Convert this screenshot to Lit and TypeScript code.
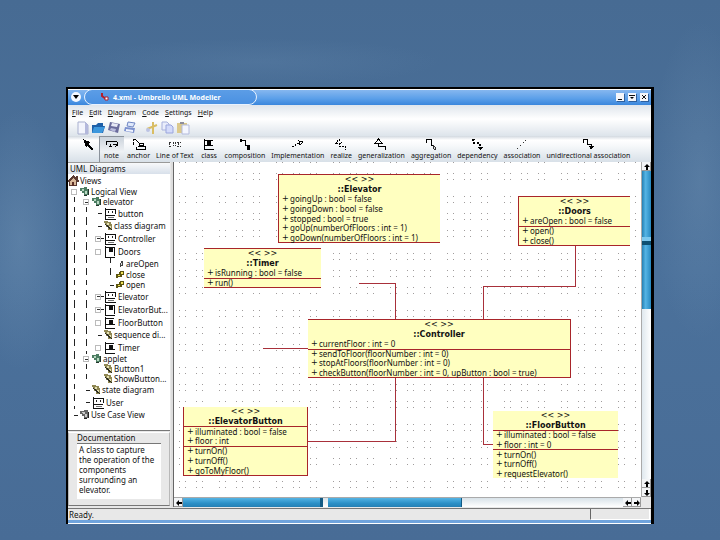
import { LitElement, html, svg, css, TemplateResult } from "lit";
import { customElement } from "lit/decorators.js";
import { classMap } from "lit/directives/class-map.js";
import { styleMap } from "lit/directives/style-map.js";

interface UmlClass {
  name: string;
  x: number;
  y: number;
  w: number;
  h: number;
  edges: string;
  headRule?: boolean;
  opsRule?: boolean;
  attrs: string[];
  ops: string[];
}

const CLASSES: UmlClass[] = [
  { name: "Elevator", x: 104, y: 12, w: 162, h: 69, edges: "tlb",
    attrs: ["goingUp : bool = false", "goingDown : bool = false", "stopped : bool = true"],
    ops: ["goUp(numberOfFloors : int = 1)", "goDown(numberOfFloors : int = 1)"] },
  { name: "Timer", x: 30, y: 86, w: 117, h: 40, edges: "tb", opsRule: true,
    attrs: ["isRunning : bool = false"], ops: ["run()"] },
  { name: "Doors", x: 344, y: 34, w: 112, h: 50, edges: "tlb", opsRule: true,
    attrs: ["areOpen : bool = false"], ops: ["open()", "close()"] },
  { name: "Controller", x: 134, y: 157, w: 263, h: 59, edges: "trb", opsRule: true,
    attrs: ["currentFloor : int = 0"],
    ops: ["sendToFloor(floorNumber : int = 0)", "stopAtFloors(floorNumber : int = 0)",
      "checkButton(floorNumber : int = 0, upButton : bool = true)"] },
  { name: "ElevatorButton", x: 9, y: 245, w: 125, h: 69, edges: "lrb", headRule: true, opsRule: true,
    attrs: ["illuminated : bool = false", "floor : int"],
    ops: ["turnOn()", "turnOff()", "goToMyFloor()"] },
  { name: "FloorButton", x: 319, y: 249, w: 125, h: 67, edges: "", headRule: true, opsRule: true,
    attrs: ["illuminated : bool = false", "floor : int = 0"],
    ops: ["turnOn()", "turnOff()", "requestElevator()"] },
];

const DOTS = [0, 6, 17, 23, 34, 40];

/* Guide cells: v = line, m = open branch, p = closed branch, b = box alone, h = tick, . = blank */
const TREE: [string, string, string, string][] = [
  ["", "home", "Views", "mid"],
  ["b", "green", "Logical View", "low"],
  ["vm", "green", "elevator", "low"],
  ["vvh", "cls", "button", "tall"],
  ["vvh", "dia", "class diagram", "mid"],
  ["vvp", "cls", "Controller", "tall"],
  ["vvb", "door", "Doors", "tall"],
  ["vv.v", "attr", "areOpen", "mid"],
  ["vv.v", "op", "close", "low"],
  ["vv.h", "op", "open", "low"],
  ["vvp", "cls", "Elevator", "tall"],
  ["vvp", "door", "ElevatorBut...", "tall"],
  ["vvb", "flag", "FloorButton", "tall"],
  ["vvh", "dia", "sequence di...", "mid"],
  ["vvb", "flag", "Timer", "tall"],
  ["vm", "green", "applet", "low"],
  ["vv.", "dia", "Button1", "low"],
  ["vv.", "dia", "ShowButton...", "low"],
  ["vh", "dia", "state diagram", "mid"],
  ["vh", "cls", "User", "tall"],
  ["h", "grey", "Use Case View", "mid"],
];

const ruled = svg`<path d="M1.5 0V11.5H12M2 1.5H11M11.5 1V6M2 7.5H11" fill="none" stroke="#111"/>`;

const TREE_ICONS: Record<string, [number, TemplateResult]> = {
  home: [11, svg`<path d="M0 6L5 0L8 2V1H10V4L11 6V7H9V11H1V7H0Z" fill="#5a3a32"/><path d="M2 6L5 3L8 6V10H2Z" fill="#d9b899"/><path d="M4 7H6V11H4Z" fill="#5b2c24"/>`],
  green: [10, svg`<path d="M0 2H4V1H7V3H9V9H7V10H4V7H2V5H0Z" fill="#4c7d62"/><path d="M2 3H4V5H2ZM5 5H7V8H5Z" fill="#b8d8c2"/><path d="M8 3V9M4 9H7" stroke="#24352c"/>`],
  grey: [10, svg`<path d="M0 2H4V1H8V3H9V9H7V10H4V7H2V5H0Z" fill="#666"/><path d="M2 3H5V5H3ZM5 5H7V8H5Z" fill="#ccc"/><path d="M8 3V9M4 9H7" stroke="#222"/>`],
  cls: [13, svg`${ruled}<path d="M4 3H5V5H4ZM8 3H9V5H8Z" fill="#222"/><path d="M4 9.5H10" stroke="#777"/>`],
  door: [13, svg`<path d="M1.5 0V11.5H11M2 1.5H10.5V10" fill="none" stroke="#111"/><path d="M5 2H9V6H5Z" fill="#111"/>`],
  flag: [13, svg`<path d="M1.5 0V11.5H11M2 1.5H10M2 7.5H11" fill="none" stroke="#111"/><path d="M5 3H9V7H5Z" fill="#111"/>`],
  dia: [9, svg`<path d="M0 1H4V2H7V4H8V10H4V7H2V5H1V3H0Z" fill="#8f8752"/><path d="M3 3H5V5H3ZM5 6H7V8H5Z" fill="#e3dfb0"/><path d="M1 4L8 10" stroke="#2a2a22"/>`],
  attr: [9, svg`<path d="M5 3H7V8H5V9H4V5H5Z" fill="#444"/><path d="M5 5H6V7H5Z" fill="#ddd"/>`],
  op: [9, svg`<path d="M4 2H8V6H6V8H2V9H0V5H3V3H4Z" fill="#5b5410"/><path d="M5 3H7V5H5ZM2 6H4V7H2Z" fill="#f1e25a"/>`],
};

const TOOLS: [string, TemplateResult][] = [
  ["", svg`<path d="M4 1L11 4L9 6L14 11L13 12L8 8L7 9Z" fill="#000"/>`],
  ["note", svg`<path d="M2 3.5H13M2 3V7M13.5 4V7L11 9M5 8.5H8M9 6.5H13M6 6V9" fill="none" stroke="#000"/>`],
  ["anchor", svg`<path d="M2 3V1.5H5M2.5 4V7M5 2L9 6M5 11.5H14V8.5H7M5.5 9V12M8 7.5H12V5.5H8Z" fill="none" stroke="#000"/>`],
  ["Line of Text", svg`<path d="M2 4.5H5M2.5 5V9M2 8.5H5M6 4L9 9M9 4L6 9M10 4.5H14M11.5 5V9M10 8.5H14" fill="none" stroke="#333" stroke-dasharray="2 1"/>`],
  ["class", svg`<path d="M3.5 1V11.5H13M4 2.5H12M4 7.5H12" fill="none" stroke="#000"/><path d="M6 3H10V7H6Z" fill="#000"/>`],
  ["composition", svg`<path d="M3 2.5H8.5V7.5H12V10" fill="none" stroke="#000"/><path d="M10 8H13V12H10ZM3 1H5V4H3Z" fill="#000"/>`],
  ["Implementation", svg`<path d="M2 9L9 5" stroke="#000" stroke-dasharray="2 1"/><path d="M9 3L13 4L10 7Z" fill="none" stroke="#000"/>`],
  ["realize", svg`<path d="M3 5H9L6 1ZM6.5 5V8.5H12.5V12" fill="none" stroke="#000" stroke-dasharray="2 1"/>`],
  ["generalization", svg`<path d="M2 5.5H9L5.5 1ZM5.5 5V8.5H12.5V12" fill="none" stroke="#000"/>`],
  ["aggregation", svg`<path d="M3 5V1.5H8.5V7.5H11" fill="none" stroke="#000"/><path d="M10 7L13 10L12 12L10 10Z" fill="#ddd" stroke="#333"/>`],
  ["dependency", svg`<path d="M3 1.5H4.5V5H10.5V9" fill="none" stroke="#000" stroke-width="2" stroke-dasharray="2 2"/><path d="M9 9H14L11 12Z" fill="#000"/>`],
  ["association", svg`<path d="M3 11L12 2" stroke="#333" stroke-dasharray="2 2"/>`],
  ["unidirectional association", svg`<path d="M3.5 5V1.5H7.5V6.5H11.5V9" fill="none" stroke="#000"/><path d="M9 8H14L11 12Z" fill="#000"/>`],
];

const FILE_ICONS: [string, TemplateResult][] = [
  ["New", svg`<path d="M3 1H10L13 4V13H3Z" fill="#f2f4fc" stroke="#a9b0cf"/><path d="M10 1V13H13V4Z" fill="#b3b8dc"/>`],
  ["Open", svg`<path d="M1 4H5L7 2H12V5H14L12 12H1Z" fill="#1c5fa8"/><path d="M3 6H14L11 12H1Z" fill="#3c97dd"/>`],
  ["Save", svg`<path d="M3 1L13 3L11 12L1 9Z" fill="#6a6b9c"/><path d="M5 2L11 3L10 6L4 5Z" fill="#e6e8f5"/><path d="M4 7L9 8L8 11L3 9Z" fill="#b9bbdc"/>`],
  ["Print", svg`<path d="M5 1L12 2L10 6L4 5Z" fill="#dfe9fb" stroke="#6f86c4"/><path d="M2 6L12 7L11 12L1 10Z" fill="#7d92cf"/><path d="M3 8L10 9V11L3 10Z" fill="#f2f5ff"/>`],
  ["Cut", svg`<path d="M9 1V13M3 8L13 4" stroke="#d9bd63" stroke-width="2"/><circle cx="4" cy="9" r="2" fill="#bcc3e4"/>`],
  ["Copy", svg`<path d="M2 1H7L9 3V9H2Z" fill="#e9edfb" stroke="#a8b1dd"/><path d="M6 4H11L13 6V12H6Z" fill="#d3dafa" stroke="#9aa5dc"/>`],
  ["Paste", svg`<path d="M1 2H11V12H1Z" fill="#dcc98c"/><path d="M4 1H8V3H4Z" fill="#8d8d9b"/><path d="M6 4H13V13H6Z" fill="#f4f6ff" stroke="#b4bbdd"/>`],
];

@customElement("uml-class-box")
class UmlClassBox extends LitElement {
  static properties = { model: { attribute: false } };
  declare model: UmlClass;

  static styles = css`
    :host { display: block; height: 100%; }
    .box {
      box-sizing: border-box; height: 100%; display: grid; grid-auto-rows: 1fr;
      background: #ffffc0; border: 0 solid #a8252a;
      font: 8px/9px "Noto Sans", sans-serif; color: #111; white-space: pre;
    }
    .t { border-top-width: 1px; }
    .r { border-right-width: 1px; }
    .b { border-bottom-width: 1px; }
    .l { border-left-width: 1px; }
    .row { padding-left: 3px; min-height: 0; display: flex; align-items: center; gap: 2px; }
    .head { justify-content: center; padding: 0; font-family: "DejaVu Sans", sans-serif; }
    .name { font-weight: bold; }
    .rule { box-shadow: inset 0 1px #a8252a; }
    .sign { width: 6px; font-family: "DejaVu Sans", sans-serif; }
  `;

  render() {
    const m = this.model;
    const member = (text: string, rule: boolean) =>
      html`<div class=${classMap({ row: true, rule })}><span class="sign">+</span><span>${text}</span></div>`;
    return html`<div class="box ${m.edges.split("").join(" ")}">
      <div class="row head">&lt;&lt; &gt;&gt;</div>
      <div class="row head name">::${m.name}</div>
      ${m.attrs.map((t, i) => member(t, !!m.headRule && i === 0))}
      ${m.ops.map((t, i) => member(t, !!m.opsRule && i === 0))}
    </div>`;
  }
}

@customElement("uml-tree")
class UmlTree extends LitElement {
  static styles = css`
    :host { display: block; }
    .tree { margin: 0; padding: 1px 0 8px; list-style: none; font: 8px/10px "Noto Sans", sans-serif; color: #111; }
    .item { display: flex; align-items: center; white-space: nowrap; overflow: hidden; }
    .low { height: 10px; }
    .mid { height: 12px; }
    .tall { height: 13px; }
    .cell { flex: none; width: 12px; height: 100%; display: grid; place-items: center; }
    .v { background: repeating-linear-gradient(#222 0 5px, transparent 5px 10px) 6px 0 / 1px 100% no-repeat; }
    .h { background: linear-gradient(#222, #222) 6px 50% / 4px 1px no-repeat; }
    .p { background: linear-gradient(#222, #222) 9px 50% / 3px 1px no-repeat; }
    .toggle { box-sizing: border-box; width: 6px; height: 6px; padding: 0; border: 1px solid #bbb; background: #fff; }
    .p .toggle, .m .toggle { background: linear-gradient(#333, #333) 50% 50% / 3px 1px no-repeat #fff; }
    .icon { flex: none; height: 12px; }
    .label { padding-left: 1px; }
  `;

  render() {
    return html`<ul class="tree">
      ${TREE.map(([cells, icon, label, size]) => {
        const [w, art] = TREE_ICONS[icon];
        return html`<li class="item ${size}">
          ${cells.split("").map((c) => html`<span class="cell ${c === "." ? "" : c}">
            ${"mpb".includes(c) ? html`<button class="toggle" aria-label="Toggle ${label}"></button>` : ""}</span>`)}
          <svg class="icon" width=${w} height="12" shape-rendering="crispEdges">${art}</svg>
          <span class="label">${label}</span>
        </li>`;
      })}
    </ul>`;
  }
}

@customElement("uml-canvas")
class UmlCanvas extends LitElement {
  static styles = css`
    :host { display: block; position: relative; overflow: hidden; background: #fff; }
    .paper { display: block; width: 100%; height: 100%; }
    .node { position: absolute; }
  `;

  render() {
    return html`
      <svg class="paper" shape-rendering="crispEdges">
        <defs>
          <pattern id="grid" x="45" y="34" width="57" height="57" patternUnits="userSpaceOnUse">
            ${DOTS.map((y) => DOTS.map((x) => svg`<rect x=${x} y=${y} width="1" height="1" fill="#a09c9c"/>`))}
          </pattern>
        </defs>
        <rect width="100%" height="100%" fill="url(#grid)"/>
        <path fill="none" stroke="#a8303a"
          d="M185 121.5H221.5V157M401.5 83V124.5H309.5V157M89 186.5H134M221.5 216V279.5H134M309.5 216V282.5H319"/>
      </svg>
      ${CLASSES.map((c) => html`<uml-class-box class="node" .model=${c}
        style=${styleMap({ left: `${c.x}px`, top: `${c.y}px`, width: `${c.w}px`, height: `${c.h}px` })}></uml-class-box>`)}
    `;
  }
}

@customElement("app-root")
class AppRoot extends LitElement {
  static styles = css`
    :host {
      display: flex; box-sizing: border-box; min-height: 100vh; padding: 87px 66px 16px;
      font: 7px/9px "Noto Sans", sans-serif; color: #111;
      background:
        radial-gradient(ellipse 50px 130px at 20px 240px, rgba(150, 180, 205, .22), transparent),
        radial-gradient(ellipse 180px 24px at 260px 62px, rgba(120, 155, 190, .16), transparent),
        radial-gradient(ellipse 50px 160px at 700px 180px, rgba(150, 180, 205, .18), transparent),
        linear-gradient(#476b93, #4b719b 50%, #486c96);
    }
    button { font: inherit; color: inherit; border: 0; padding: 0; background: none; }
    .window { flex: 1; min-width: 0; display: flex; flex-direction: column; border: solid #000; border-width: 2px 3px 0 2px; background: #e8e8e8; }
    .title { height: 16px; display: flex; align-items: center; gap: 3px; padding: 0 3px; background: linear-gradient(#fff 0 1px, #86b7ef 1px, #5b9fe9 60%, #3a86dc); }
    .sysmenu { width: 10px; height: 10px; border-radius: 50%; background: #f4f8ff; display: grid; place-items: center; }
    .tab { box-sizing: border-box; width: 173px; height: 16px; margin: 0 auto 0 0; display: flex; align-items: center; gap: 3px; padding-left: 15px; border: 1px solid #e8f2ff; border-radius: 8px; background: linear-gradient(#5c9de6, #4a91e2); color: #fff; font-size: 7px; font-weight: bold; white-space: nowrap; }
    .winbtn { width: 8px; height: 8px; margin-left: 1px; background: #f4f6fa; box-shadow: 1px 1px #2d5f9e; display: grid; place-items: center; }
    .menu { height: 14px; display: flex; align-items: center; gap: 6px; padding-left: 4px; background: linear-gradient(#dfe5ec, #fff); }
    .files { height: 17px; display: flex; align-items: center; gap: 2px; padding-left: 7px; background: linear-gradient(#fff, #dde4eb); }
    .files .gap { margin-left: 5px; }
    .filebtn { width: 14px; height: 14px; }
    .filebtn svg, .tool svg, .winbtn svg, .sysmenu svg { display: block; }
    .tools { height: 26px; display: flex; padding-left: 6px; background: linear-gradient(#d2d9e0, #fff 4px, #f6f8fa 10px, #d8e0e8); }
    .tool { box-sizing: border-box; min-width: 25px; padding: 2px 3px 0; display: flex; flex-direction: column; align-items: center; white-space: nowrap; }
    .on { background: linear-gradient(#c9d1da, #eef1f4 60%, #d5dbe2); box-shadow: inset 1px 1px #8b929b; }
    .body { flex: 1; display: flex; min-height: 0; }
    .side { flex: none; width: 102px; display: flex; flex-direction: column; border-top: 1px solid #999; box-sizing: border-box; }
    .sidehead { height: 11px; padding-left: 2px; font-size: 8px; line-height: 11px; background: linear-gradient(#f8f9fb, #d8e0ea); }
    .treepane { flex: 1; background: #fff; border-bottom: 1px solid #777; }
    .doc { margin: 1px 0; border: 1px solid #b8b8b8; border-top-color: #fff; border-bottom-color: #777; display: flex; flex-direction: column; padding: 0 8px 6px; }
    .doclabel { font-size: 8px; line-height: 10px; }
    .doctext { box-sizing: border-box; height: 56px; margin: 0; padding: 1px 2px; resize: none; overflow: hidden; border: 0; border-top: 1px solid #777; border-radius: 0; background: #fff; font: 8px/10px "Noto Sans", sans-serif; color: #111; }
    .splitter { flex: none; width: 2px; margin: 0 0 0 1px; border-right: 1px solid #666; background: #ddd; }
    .view { flex: 1; min-width: 0; display: grid; grid-template: 1fr 10px / 1fr 10px; }
    .vbar { display: flex; flex-direction: column; background: linear-gradient(90deg, #dfe8ee, #fff); border-left: 1px solid #aaa; }
    .hbar { display: flex; background: linear-gradient(#d8e2e8, #fff); border-top: 1px solid #aaa; }
    .arrow { flex: none; width: 9px; height: 9px; display: grid; place-items: center; background: #f3f5f7; box-shadow: inset -1px -1px #999; }
    .vthumb { background: linear-gradient(90deg, #2580b4, #55b4e4 40%, #2788c0); }
    .hthumb { background: linear-gradient(#55b4e4, #2b8fc6 60%, #2580b4); border-right: 3px solid #125a84; box-sizing: border-box; }
    .upper { flex: 66 0 0; border-bottom: 4px solid #7cc8ee; }
    .lower { flex: 64 0 0; border-top: 4px solid #0d5072; }
    .vrest { flex: 170 0 0; }
    .first { flex: 139 0 0; }
    .second { flex: 135 0 0; border-right-width: 1px; margin-left: 5px; }
    .hrest { flex: 163 0 0; }
    .status { height: 12px; margin-top: 1px; display: flex; border-top: 1px solid #777; box-sizing: border-box; }
    .ready { flex: 1; padding-left: 1px; font-size: 8px; line-height: 11px; }
    .panel { width: 58px; margin-right: 1px; border: 1px solid #fff; border-top: 0; border-left-color: #666; }
    .foot { height: 4px; box-sizing: border-box; background: #6fa3dc; border-bottom: 1px solid #fff; }
  `;

  private arrow(dir: string) {
    const shapes: Record<string, string> = {
      up: "M3 0L6 3H4V6H2V3H0Z",
      down: "M3 6L6 3H4V0H2V3H0Z",
      left: "M0 3L3 0V2H6V4H3V6Z",
      right: "M6 3L3 0V2H0V4H3V6Z",
    };
    return html`<button class="arrow" aria-label="Scroll ${dir}"><svg width="6" height="6"><path d=${shapes[dir]}/></svg></button>`;
  }

  render() {
    return html`<div class="window">
      <div class="title">
        <button class="sysmenu" aria-label="Window menu"><svg width="6" height="4"><path d="M0 0H6L3 4Z"/></svg></button>
        <div class="tab">
          <svg width="10" height="10"><path d="M2 1V4L6 7" fill="none" stroke="#b3202c" stroke-width="2"/><path d="M5 5H8V8H5Z" fill="#fff" stroke="#b3202c"/></svg>
          <span>4.xmi - Umbrello UML Modeller</span>
        </div>
        <button class="winbtn" aria-label="Minimize"><svg width="8" height="8"><path d="M2 6.5H6" stroke="#111"/></svg></button>
        <button class="winbtn" aria-label="Maximize"><svg width="8" height="8"><path d="M1 2.5H7" stroke="#111"/><path d="M2 4H6L4 6Z"/></svg></button>
        <button class="winbtn" aria-label="Close"><svg width="8" height="8"><path d="M2 2L6 6M6 2L2 6" stroke="#111"/></svg></button>
      </div>
      <nav class="menu">
        ${["File", "Edit", "Diagram", "Code", "Settings", "Help"].map((m) => html`<button><u>${m[0]}</u>${m.slice(1)}</button>`)}
      </nav>
      <div class="files">
        ${FILE_ICONS.map(([n, art], i) => html`<button class=${classMap({ filebtn: true, gap: i === 4 })} aria-label=${n}>
          <svg width="14" height="14">${art}</svg></button>`)}
      </div>
      <div class="tools">
        ${TOOLS.map(([n, art]) => html`<button class=${classMap({ tool: true, on: n === "note" })} aria-label=${n || "select"}>
          <svg width="16" height="13" shape-rendering="crispEdges">${art}</svg><span>${n}</span></button>`)}
      </div>
      <div class="body">
        <aside class="side">
          <div class="sidehead">UML Diagrams</div>
          <div class="treepane"><uml-tree></uml-tree></div>
          <div class="doc">
            <label class="doclabel" for="doc">Documentation</label>
            <textarea class="doctext" id="doc" .value=${"A class to capture the operation of the components surrounding an elevator."}></textarea>
          </div>
        </aside>
        <div class="splitter"></div>
        <div class="view">
          <uml-canvas></uml-canvas>
          <div class="vbar">
            ${this.arrow("up")}
            <div class="vthumb upper"></div><div class="vthumb lower"></div><div class="vrest"></div>
            ${this.arrow("up")}${this.arrow("down")}
          </div>
          <div class="hbar">
            ${this.arrow("left")}
            <div class="hthumb first"></div><div class="hthumb second"></div><div class="hrest"></div>
            ${this.arrow("left")}${this.arrow("right")}
          </div>
        </div>
      </div>
      <div class="status"><div class="ready">Ready.</div><div class="panel"></div></div>
      <div class="foot"></div>
    </div>`;
  }
}
